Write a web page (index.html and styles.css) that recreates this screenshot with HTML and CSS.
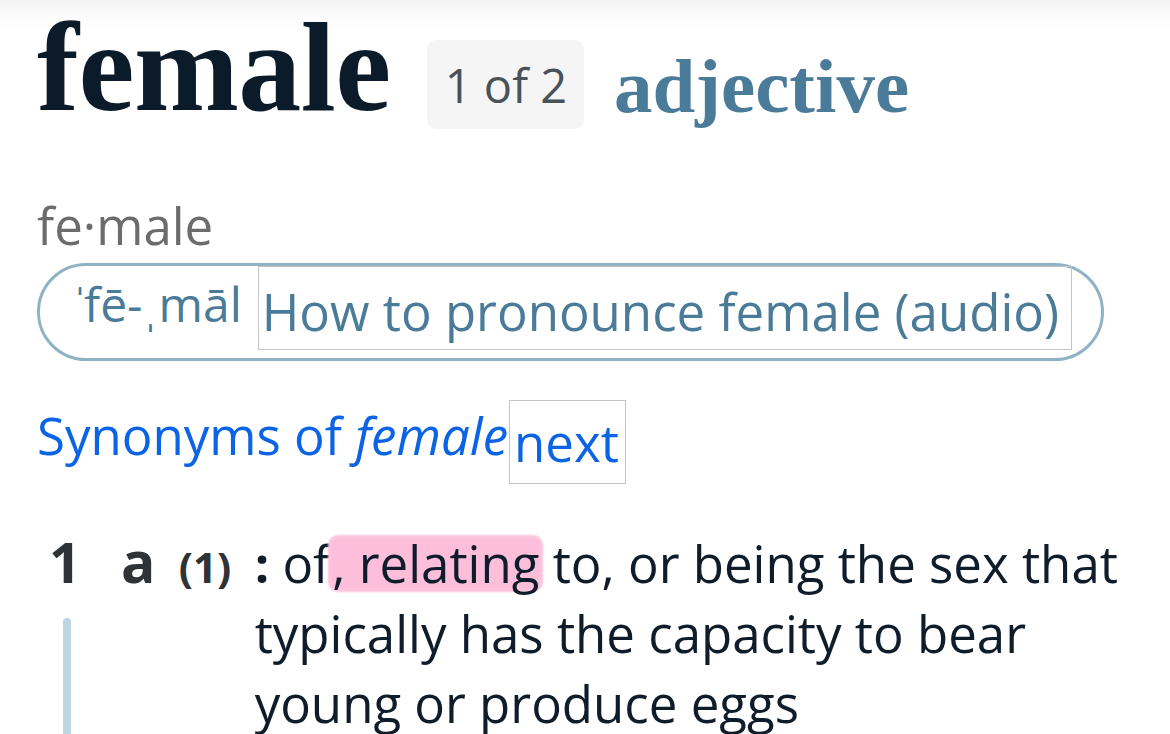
FILE: index.html
```html
<!DOCTYPE html>
<html lang="en">
<head>
<meta charset="utf-8">
<link rel="stylesheet" href="styles.css">
</head>
<body>
<main class="entry">
  <div class="head">
    <h1 class="hword">female</h1>
    <span class="badge">1 of 2</span>
    <span class="pos">adjective</span>
  </div>
  <div class="syll">fe·male</div>
  <div class="pron">
    <span class="pr"><span class="stress">ˈ</span>fē-ˌmāl</span>
    <span class="alt">How to pronounce female (audio)</span>
  </div>
  <div class="syn">
    <span class="syn-link">Synonyms of <em>female</em></span>
    <span class="alt alt-next">next</span>
  </div>
  <div class="def">
    <div class="num-col">
      <span class="num">1</span>
      <span class="bar"></span>
    </div>
    <span class="letter">a</span>
    <span class="sub">(1)</span>
    <p class="dt"><b class="colon">:</b> of<mark class="hl">, relating</mark> to, or being the sex that typically has the capacity to bear young or produce eggs</p>
  </div>
</main>
</body>
</html>
```

FILE: styles.css
```css
html, body {
  margin: 0;
  padding: 0;
}
body {
  width: 1170px;
  height: 734px;
  overflow: hidden;
  background: linear-gradient(#f3f3f3 0, #fbfbfb 14px, #ffffff 34px);
  font-family: "Open Sans", "Liberation Sans", sans-serif;
  color: #0f1d2b;
}
.entry {
  padding: 0 37px;
}

/* heading row */
.head {
  display: flex;
  align-items: flex-start;
}
.hword {
  margin: 5px 0 0 0;
  font-family: "Liberation Serif", "Times New Roman", serif;
  font-weight: 700;
  font-size: 126px;
  line-height: 126px;
  color: #0c1b29;
  letter-spacing: -0.5px;
}
.badge {
  margin: 40px 0 0 36px;
  height: 89px;
  box-sizing: border-box;
  padding: 0 17px 0 18px;
  display: flex;
  align-items: center;
  background: #f5f5f5;
  border-radius: 9px;
  font-size: 47px;
  line-height: 46px;
  color: #495159;
}
.pos {
  margin: 46px 0 0 30px;
  font-family: "Liberation Serif", "Times New Roman", serif;
  font-weight: 700;
  font-size: 77px;
  line-height: 80px;
  color: #4a7b99;
}

/* syllables */
.syll {
  margin-top: 64px;
  font-size: 51px;
  line-height: 60px;
  color: #6c6c6c;
}

/* pronunciation pill */
.pron {
  margin-top: 8px;
  display: inline-flex;
  align-items: flex-start;
  height: 98px;
  box-sizing: border-box;
  border: 3px solid #8fb3c5;
  border-radius: 49px;
  padding: 0 29px 0 32px;
  color: #4a7b99;
}
.pr {
  margin-top: 7px;
  margin-right: 16px;
  font-size: 48px;
  line-height: 62px;
}
.stress {
  margin-right: -4px;
}
.alt {
  display: inline-block;
  border: 1px solid #c4c4c4;
  padding: 13px 12px 7px 3px;
  font-size: 51px;
  line-height: 62px;
}

/* synonyms */
.syn {
  margin-top: 39px;
  display: flex;
  align-items: flex-start;
  color: #0b63e5;
}
.syn-link {
  margin-top: 4px;
  font-size: 51px;
  line-height: 62px;
}
.syn-link em {
  font-style: italic;
}
.alt-next {
  margin-left: 1px;
  padding: 10px 6px 10px 4px;
}

/* definition */
.def {
  margin-top: 44px;
  display: flex;
  align-items: baseline;
}
.num-col {
  display: flex;
  flex-direction: column;
  width: 84px;
  padding-left: 12px;
  box-sizing: border-box;
}
.num {
  font-weight: 700;
  font-size: 56px;
  line-height: 60px;
  color: #303336;
}
.bar {
  display: block;
  margin: 27px 0 0 14px;
  width: 8px;
  height: 160px;
  background: #bdd6e2;
  border-radius: 4px 4px 0 0;
}
.letter {
  font-weight: 700;
  font-size: 57px;
  line-height: 60px;
  color: #303336;
  width: 58px;
}
.sub {
  font-weight: 700;
  font-size: 42px;
  line-height: 60px;
  color: #303336;
  width: 76px;
}
.dt {
  margin: 0;
  width: 880px;
  font-size: 51px;
  line-height: 70px;
  color: #0f1d2b;
}
.colon {
  font-weight: 700;
}
.hl {
  display: inline-block;
  line-height: 49px;
  margin-left: 2px;
  background: #fdbedb;
  color: inherit;
  border-radius: 6px;
  box-shadow: 0 0 2px 4px #fdc3dd;
}
```
